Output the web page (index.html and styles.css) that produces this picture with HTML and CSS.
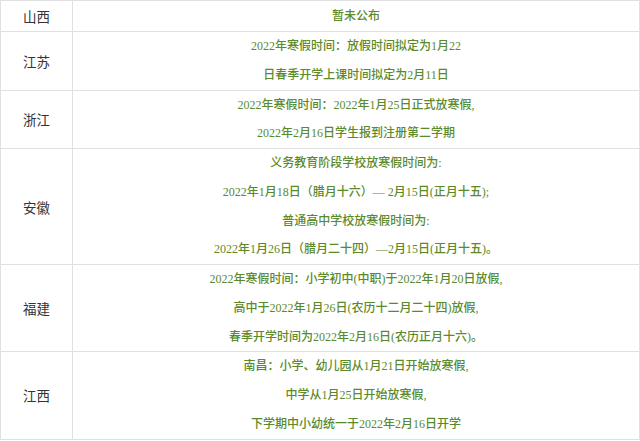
FILE: index.html
```html
<!DOCTYPE html>
<html lang="zh-CN">
<head>
<meta charset="utf-8">
<title>寒假时间</title>
<link rel="stylesheet" href="styles.css">
</head>
<body>
<table class="holiday">
  <colgroup><col class="col-prov"><col class="col-info"></colgroup>
  <tbody>
    <tr class="row-single">
      <td class="prov">山西</td>
      <td class="info"><div class="line">暂未公布</div></td>
    </tr>
    <tr>
      <td class="prov">江苏</td>
      <td class="info">
        <div class="line">2022年寒假时间：放假时间拟定为1月22</div>
        <div class="line">日春季开学上课时间拟定为2月11日</div>
      </td>
    </tr>
    <tr>
      <td class="prov">浙江</td>
      <td class="info">
        <div class="line">2022年寒假时间：2022年1月25日正式放寒假,</div>
        <div class="line">2022年2月16日学生报到注册第二学期</div>
      </td>
    </tr>
    <tr>
      <td class="prov">安徽</td>
      <td class="info">
        <div class="line">义务教育阶段学校放寒假时间为:</div>
        <div class="line">2022年1月18日（腊月十六）— 2月15日(正月十五);</div>
        <div class="line">普通高中学校放寒假时间为:</div>
        <div class="line">2022年1月26日（腊月二十四）—2月15日(正月十五)。</div>
      </td>
    </tr>
    <tr>
      <td class="prov">福建</td>
      <td class="info">
        <div class="line">2022年寒假时间：小学初中(中职)于2022年1月20日放假,</div>
        <div class="line">高中于2022年1月26日(农历十二月二十四)放假,</div>
        <div class="line">春季开学时间为2022年2月16日(农历正月十六)。</div>
      </td>
    </tr>
    <tr>
      <td class="prov">江西</td>
      <td class="info">
        <div class="line">南昌：小学、幼儿园从1月21日开始放寒假,</div>
        <div class="line">中学从1月25日开始放寒假,</div>
        <div class="line">下学期中小幼统一于2022年2月16日开学</div>
      </td>
    </tr>
  </tbody>
</table>
</body>
</html>
```
FILE: styles.css
```css
html, body {
  margin: 0;
  padding: 0;
  background: #ffffff;
}

.holiday {
  width: 640px;
  border-collapse: collapse;
  table-layout: fixed;
  font-family: "Liberation Serif", "Noto Sans CJK SC", serif;
}

.col-prov {
  width: 72px;
}

.holiday td {
  border: 1px solid #e0e0e0;
  padding: 0;
  text-align: center;
  vertical-align: middle;
}

.prov {
  font-size: 13.5px;
  color: #333333;
}

.info {
  font-size: 12px;
  color: #5b8a2b;
  font-weight: 500;
}

.line {
  line-height: 28.75px;
  white-space: nowrap;
}

.row-single td {
  height: 30px;
}
```
